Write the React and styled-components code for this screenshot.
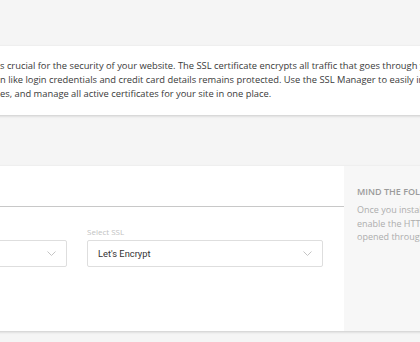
import React from "react";
import styled, { createGlobalStyle } from "styled-components";

const Global = createGlobalStyle`
  html, body { margin: 0; padding: 0; }
  body {
    background: #f5f5f5;
    overflow: hidden;
    width: 420px;
    height: 342px;
    font-family: "Open Sans", "Liberation Sans", sans-serif;
  }
`;

const Page = styled.div`
  margin-left: -190px;
  width: 1000px;
  padding-top: 46px;
  display: flex;
  flex-direction: column;
  gap: 51px;
`;

const Card = styled.div`
  background: #fff;
  box-shadow: 0 1px 3px rgba(0, 0, 0, 0.18);
  border-radius: 2px;
`;

const Intro = styled(Card)`
  height: 69px;
  box-sizing: border-box;
  padding: 13px 0 14px 190px;
`;

const IntroLine = styled.div`
  font-size: 9.35px;
  line-height: 14px;
  color: #3a3a3a;
  white-space: nowrap;
`;

const Manager = styled(Card)`
  display: flex;
  height: 165px;
`;

const Main = styled.div`
  width: 534px;
  display: flex;
  flex-direction: column;
`;

const TabBar = styled.div`
  height: 40px;
  border-bottom: 1px solid #c8c8c8;
`;

const FormRow = styled.div`
  display: grid;
  grid-template-columns: 236px 236px;
  gap: 20px;
  padding: 20px 21px 0;
`;

const Field = styled.div`
  display: flex;
  flex-direction: column;
`;

const Label = styled.div`
  font-size: 8px;
  line-height: 10px;
  height: 13px;
  color: #c2c2c2;
  white-space: nowrap;
`;

const Select = styled.div`
  height: 27px;
  box-sizing: border-box;
  border: 1px solid #dedede;
  border-radius: 2px;
  display: flex;
  align-items: center;
  justify-content: space-between;
  padding: 0 10px 0 10px;
`;

const SelectValue = styled.span`
  font-family: Roboto, "Liberation Sans", sans-serif;
  font-size: 9.3px;
  color: #333;
`;

const Aside = styled.div`
  flex: 1;
  background: #f7f7f7;
  padding: 19px 0 0 13px;
`;

const AsideTitle = styled.div`
  font-size: 9px;
  font-weight: 600;
  line-height: 14px;
  color: #9b9b9b;
  text-transform: uppercase;
  white-space: nowrap;
  margin-bottom: 4px;
`;

const AsideLine = styled.div`
  font-size: 9px;
  line-height: 13.7px;
  color: #adadad;
  white-space: nowrap;
`;

const Chevron = () => (
  <svg width="9" height="5" viewBox="0 0 9 5" fill="none">
    <path d="M0.5 0.5 L4.5 4.5 L8.5 0.5" stroke="#c4c4c4" strokeWidth="1" />
  </svg>
);

export default function App() {
  return (
    <>
      <Global />
      <Page>
        <Intro>
          <IntroLine>
            s crucial for the security of your website. The SSL certificate encrypts all traffic that goes through your website
          </IntroLine>
          <IntroLine>
            n like login credentials and credit card details remains protected. Use the SSL Manager to easily install
          </IntroLine>
          <IntroLine>
            es, and manage all active certificates for your site in one place.
          </IntroLine>
        </Intro>
        <Manager>
          <Main>
            <TabBar />
            <FormRow>
              <Field>
                <Label />
                <Select>
                  <span />
                  <Chevron />
                </Select>
              </Field>
              <Field>
                <Label>Select SSL</Label>
                <Select>
                  <SelectValue>Let's Encrypt</SelectValue>
                  <Chevron />
                </Select>
              </Field>
            </FormRow>
          </Main>
          <Aside>
            <AsideTitle>Mind the following</AsideTitle>
            <AsideLine>Once you install an SSL certificate, make sure to</AsideLine>
            <AsideLine>enable the HTTPS Enforce option so your site is</AsideLine>
            <AsideLine>opened through a secure connection.</AsideLine>
          </Aside>
        </Manager>
      </Page>
    </>
  );
}
